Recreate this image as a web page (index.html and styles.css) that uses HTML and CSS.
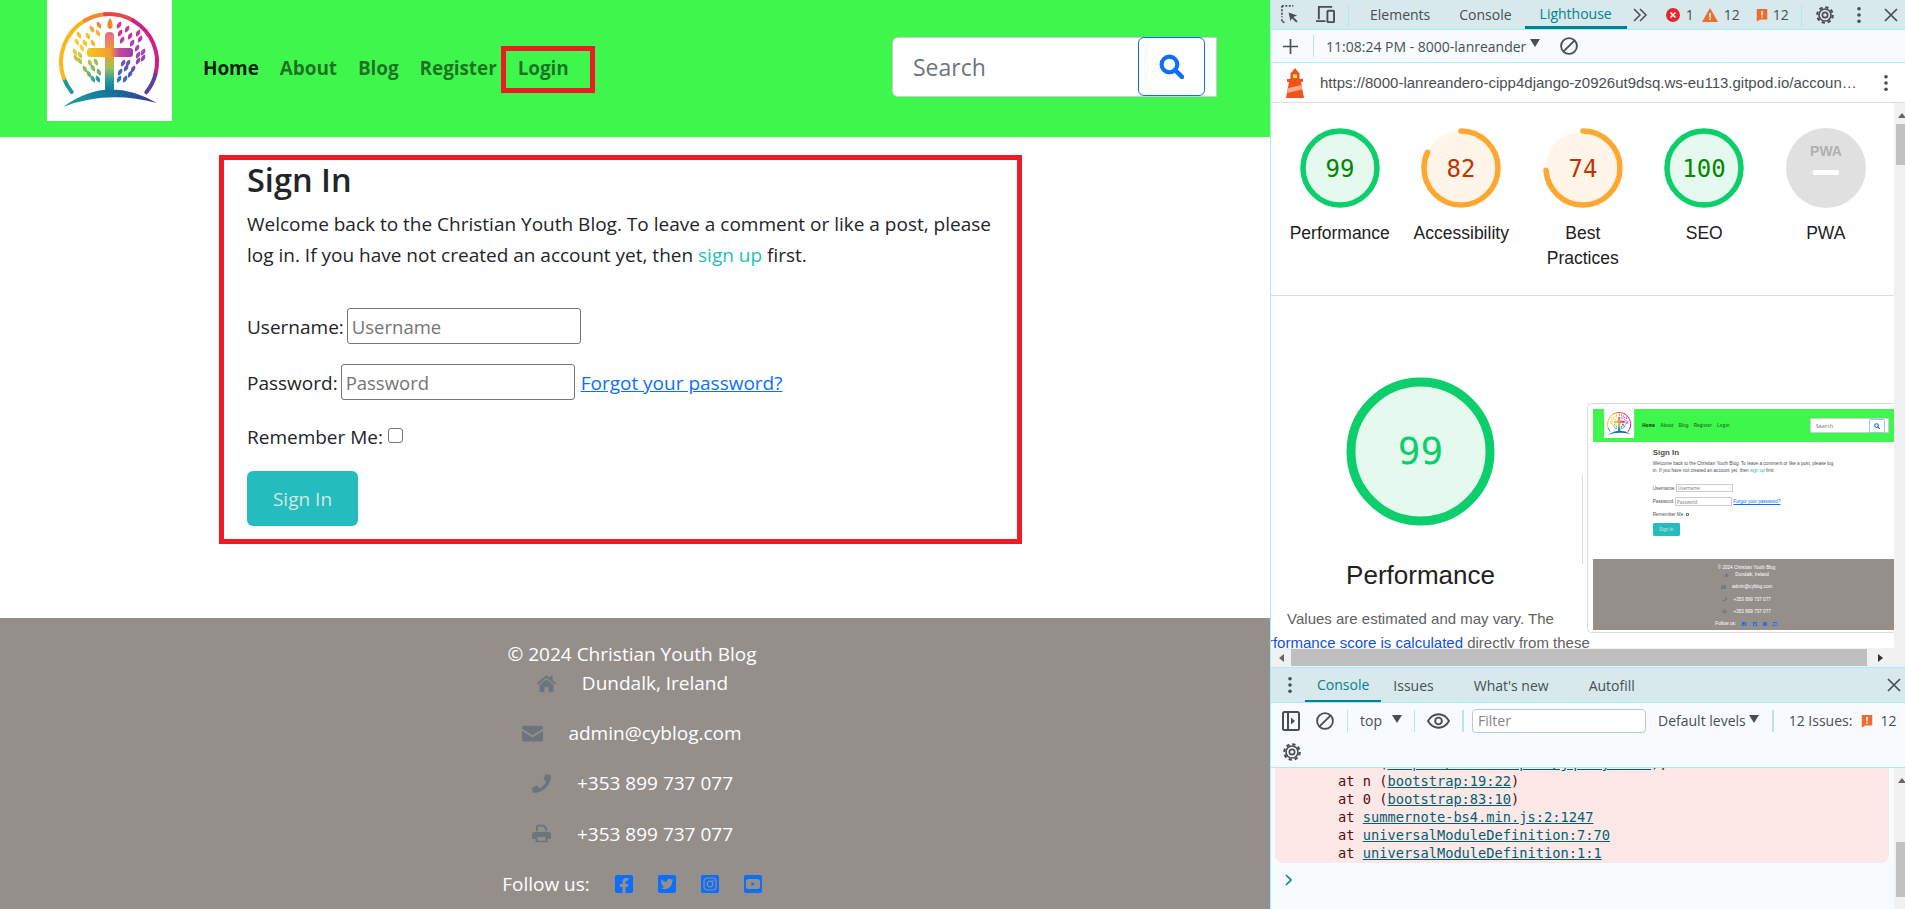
FILE: index.html
```html
<!DOCTYPE html>
<html lang="en">
<head>
    <meta charset="UTF-8">
    <meta name="viewport" content="width=device-width, initial-scale=1.0">
    <title>Christian Youth Blog - Sign In</title>
    <link rel="stylesheet" href="styles.css">
</head>
<body>

<!-- Shared icons -->
<svg class="icon-defs" aria-hidden="true">
    <defs>
        <linearGradient id="ground" x1="0" y1="0" x2="1" y2="0">
            <stop offset="0" stop-color="#1fa39a"/><stop offset=".5" stop-color="#12759f"/><stop offset="1" stop-color="#45308f"/>
        </linearGradient>
        <linearGradient id="crossV" x1="0" y1="0" x2="0" y2="1">
            <stop offset="0" stop-color="#e86a8c"/><stop offset=".35" stop-color="#f0a02c"/><stop offset=".6" stop-color="#9cc254"/><stop offset=".8" stop-color="#2a9aa0"/><stop offset="1" stop-color="#14709f"/>
        </linearGradient>
        <linearGradient id="crossH" x1="0" y1="0" x2="1" y2="0">
            <stop offset="0" stop-color="#f7c51d"/><stop offset=".5" stop-color="#f0a02c"/><stop offset=".7" stop-color="#c9489a"/><stop offset="1" stop-color="#9a3fae"/>
        </linearGradient>
        <path id="leafL" d="M-1.8-3.6C1.2-2.6 2.9 0 1.8 3.4C-1.4 2.8-3.3-.4-1.8-3.6Z"/>
        <path id="leafR" d="M1.8-3.6C-1.2-2.6-2.9 0-1.8 3.4C1.4 2.8 3.3-.4 1.8-3.6Z"/>
    </defs>
    <symbol id="logo" viewBox="0 0 125 121">
        <rect width="125" height="121" fill="#fff"/>
        <g fill="none" stroke-width="4" stroke-linecap="round">
            <path d="M24.7 92A48 48 0 0 1 16.9 78.4" stroke="#1b9a9a"/>
            <path d="M16.9 78.4A48 48 0 0 1 38 20.4" stroke="#f7b71d"/>
            <path d="M38 20.4A48 48 0 0 1 57.8 14.2" stroke="#f08a2b"/>
            <path d="M57.8 14.2A48 48 0 0 1 86 20.4" stroke="#e5484f"/>
            <path d="M86 20.4A48 48 0 0 1 108.4 74.4" stroke="#d01f86"/>
            <path d="M108.4 74.4A48 48 0 0 1 99.3 92.2" stroke="#5b3fa0"/>
        </g>
        <path d="M16 107Q60 74 110 103Q60 90 16 107Z" fill="url(#ground)"/>
        <path d="M63 18C66 22 67 28 63 29C59 28 60 22 63 18Z" fill="#f08a2b"/>
        <rect x="58" y="32" width="9" height="60" rx="4" fill="url(#crossV)"/>
        <rect x="40" y="48" width="46" height="9" rx="3" fill="url(#crossH)"/>
        <use href="#leafL" x="52" y="25" fill="#f08c2e"/><use href="#leafL" x="45" y="29" fill="#f7a823"/>
        <use href="#leafL" x="51" y="33" fill="#f7b71d"/><use href="#leafL" x="32" y="35" fill="#f9c31f"/>
        <use href="#leafL" x="41" y="36" fill="#f9c31f"/><use href="#leafL" x="30" y="42" fill="#f8d02c"/>
        <use href="#leafL" x="38" y="43" fill="#f5c52a"/><use href="#leafL" x="46" y="43" fill="#f1bd2d"/>
        <use href="#leafL" x="35" y="48" fill="#f6cd3a"/><use href="#leafL" x="28" y="52" fill="#e8c84a"/>
        <use href="#leafL" x="33" y="55" fill="#d2c44a"/><use href="#leafL" x="29" y="58" fill="#c2c64e"/>
        <use href="#leafL" x="33" y="61" fill="#b5c450"/><use href="#leafL" x="43" y="63" fill="#a8c452"/>
        <use href="#leafL" x="49" y="62" fill="#9dbf55"/><use href="#leafL" x="38" y="69" fill="#8cbf5c"/>
        <use href="#leafL" x="46" y="68" fill="#82bb60"/><use href="#leafL" x="42" y="74" fill="#6fb46a"/>
        <use href="#leafL" x="52" y="72" fill="#74b56a"/><use href="#leafL" x="46" y="79" fill="#3ea596"/>
        <use href="#leafL" x="51" y="79" fill="#2d9aa0"/>
        <use href="#leafR" x="72" y="25" fill="#e02f7e"/><use href="#leafR" x="80" y="29" fill="#d92f8c"/>
        <use href="#leafR" x="73" y="33" fill="#d62e90"/><use href="#leafR" x="91" y="33" fill="#cf2fa0"/>
        <use href="#leafR" x="83" y="36" fill="#cb30a5"/><use href="#leafR" x="75" y="40" fill="#c233a6"/>
        <use href="#leafR" x="93" y="39" fill="#c133ad"/><use href="#leafR" x="85" y="43" fill="#b938ad"/>
        <use href="#leafR" x="90" y="48" fill="#ad3fb0"/><use href="#leafR" x="96" y="52" fill="#a843b0"/>
        <use href="#leafR" x="91" y="55" fill="#a046ae"/><use href="#leafR" x="96" y="58" fill="#9549ae"/>
        <use href="#leafR" x="91" y="61" fill="#8a4cae"/><use href="#leafR" x="81" y="63" fill="#7a52ae"/>
        <use href="#leafR" x="76" y="63" fill="#7055ae"/><use href="#leafR" x="86" y="69" fill="#5f58b0"/>
        <use href="#leafR" x="79" y="68" fill="#5a5cb2"/><use href="#leafR" x="83" y="74" fill="#4f5fb4"/>
        <use href="#leafR" x="73" y="72" fill="#4f62b4"/><use href="#leafR" x="78" y="79" fill="#3f6ab8"/>
        <use href="#leafR" x="72" y="79" fill="#3a70b8"/>
    </symbol>
    <symbol id="i-search" viewBox="0 0 24 24">
        <circle cx="10" cy="10" r="7.5" fill="none" stroke="currentColor" stroke-width="4"/>
        <path d="M15.5 15.5L22 22" stroke="currentColor" stroke-width="4.4" stroke-linecap="round"/>
    </symbol>
    <symbol id="i-home" viewBox="0 0 24 20">
        <path fill="currentColor" d="M12 .5L1 9.6l1.4 1.7L12 3.4l9.6 7.9L23 9.6l-4-3.3V1.5h-3v2.3Z"/>
        <path fill="currentColor" d="M12 5.2L4 11.8V19a1 1 0 0 0 1 1h4.6v-5.6h4.8V20H19a1 1 0 0 0 1-1v-7.2Z"/>
    </symbol>
    <symbol id="i-mail" viewBox="0 0 24 18">
        <path fill="currentColor" d="M2 0h20a2 2 0 0 1 2 2v1.2L12 11 0 3.2V2a2 2 0 0 1 2-2Z"/>
        <path fill="currentColor" d="M0 5.8V16a2 2 0 0 0 2 2h20a2 2 0 0 0 2-2V5.8L12 13.6Z"/>
    </symbol>
    <symbol id="i-phone" viewBox="0 0 512 512">
        <path fill="currentColor" d="M493.4 24.6l-104-24c-11.3-2.6-22.9 3.3-27.5 13.9l-48 112c-4.2 9.8-1.4 21.3 6.9 28l60.6 49.6c-36 76.7-98.9 140.5-177.2 177.2l-49.6-60.6c-6.8-8.3-18.2-11.1-28-6.9l-112 48C3.9 366.5-2 378.1.6 389.4l24 104C27.1 504.2 36.7 512 48 512c256.1 0 464-207.5 464-464 0-11.2-7.7-20.9-18.6-23.4z"/>
    </symbol>
    <symbol id="i-print" viewBox="0 0 24 24">
        <path fill="currentColor" fill-rule="evenodd" d="M5 9V3a2 2 0 0 1 2-2h8l4 3.5V9h-2.5V5.5L14 3H7.5v6ZM3 10h18a3 3 0 0 1 3 3v6h-4.5v4h-15v-4H0v-6a3 3 0 0 1 3-3ZM7 16.5V21h10v-4.5Z"/>
    </symbol>
    <symbol id="i-fb" viewBox="0 32 448 448">
        <path fill="currentColor" d="M400 32H48A48 48 0 0 0 0 80v352a48 48 0 0 0 48 48h137.25V327.69h-63V256h63v-54.64c0-62.15 37-96.48 93.67-96.48 27.14 0 55.52 4.84 55.52 4.84v61h-31.27c-30.81 0-40.42 19.12-40.42 38.73V256h68.78l-11 71.69h-57.78V480H400a48 48 0 0 0 48-48V80a48 48 0 0 0-48-48z"/>
    </symbol>
    <symbol id="i-tw" viewBox="0 32 448 448">
        <path fill="currentColor" d="M400 32H48C21.5 32 0 53.5 0 80v352c0 26.5 21.5 48 48 48h352c26.5 0 48-21.5 48-48V80c0-26.5-21.5-48-48-48zm-48.9 158.8c.2 2.8.2 5.7.2 8.5 0 86.7-66 186.6-186.6 186.6-37.2 0-71.7-10.8-100.7-29.4 5.3.6 10.4.8 15.8.8 30.7 0 58.9-10.4 81.4-28-28.8-.6-53-19.5-61.3-45.5 10.1 1.5 19.2 1.5 29.6-1.2-30-6.1-52.5-32.5-52.5-64.4v-.8c8.7 4.9 18.9 7.9 29.6 8.3a65.447 65.447 0 0 1-29.2-54.6c0-12.2 3.2-23.4 8.9-33.1 32.3 39.8 80.8 65.8 135.2 68.6-9.3-44.5 24-80.6 64-80.6 18.9 0 35.9 7.9 47.9 20.7 14.8-2.8 29-8.3 41.6-15.8-4.9 15.2-15.1 28-28.6 36 13.1-1.4 25.9-5 37.7-10.1-8.9 13.1-20.1 24.7-32.9 34z"/>
    </symbol>
    <symbol id="i-ig" viewBox="0 0 18 18">
        <rect width="18" height="18" rx="2" fill="currentColor"/>
        <rect x="3" y="3" width="12" height="12" rx="3.2" fill="none" stroke="#958f8c" stroke-width="1.2"/>
        <circle cx="9" cy="9" r="2.8" fill="none" stroke="#958f8c" stroke-width="1.2"/>
        <circle cx="12.3" cy="5.7" r=".8" fill="#958f8c"/>
    </symbol>
    <symbol id="i-yt" viewBox="0 0 18 18">
        <rect width="18" height="18" rx="2" fill="currentColor"/>
        <rect x="2" y="4" width="14" height="10" rx="2.6" fill="#958f8c"/>
        <path d="M7.5 7v4l3.4-2Z" fill="currentColor"/>
    </symbol>
    <symbol id="i-gear" viewBox="0 0 24 24">
        <circle cx="12" cy="12" r="3.2" fill="none" stroke="currentColor" stroke-width="2"/>
        <circle cx="12" cy="12" r="7.2" fill="none" stroke="currentColor" stroke-width="2"/>
        <circle cx="12" cy="12" r="9.3" fill="none" stroke="currentColor" stroke-width="2.6" stroke-dasharray="4 3.3"/>
    </symbol>
    <symbol id="i-block" viewBox="0 0 24 24">
        <circle cx="12" cy="12" r="9.5" fill="none" stroke="currentColor" stroke-width="2.2"/>
        <path d="M18.5 5.5L5.5 18.5" stroke="currentColor" stroke-width="2.2"/>
    </symbol>
    <symbol id="i-flag" viewBox="0 0 16 16">
        <path fill="#ed6d2f" d="M2 1h12v12H6l-4 2.5Z"/>
        <path fill="#fff" d="M7.2 3.5h1.6v5H7.2ZM7.2 9.6h1.6v1.6H7.2Z"/>
    </symbol>
    <symbol id="i-kebab" viewBox="0 0 6 20">
        <circle cx="3" cy="3" r="2" fill="currentColor"/><circle cx="3" cy="10" r="2" fill="currentColor"/><circle cx="3" cy="17" r="2" fill="currentColor"/>
    </symbol>
    <symbol id="i-close" viewBox="0 0 14 14">
        <path d="M1 1L13 13M13 1L1 13" stroke="currentColor" stroke-width="1.7"/>
    </symbol>
</svg>

<!-- Blog page -->
<div class="page">
    <header class="site-header">
        <svg class="logo"><use href="#logo"/></svg>
        <nav class="site-nav">
            <a class="nav-link active">Home</a>
            <a class="nav-link">About</a>
            <a class="nav-link">Blog</a>
            <a class="nav-link">Register</a>
            <a class="nav-link nav-boxed">Login</a>
        </nav>
        <form class="search">
            <input class="search-input" placeholder="Search">
            <span class="search-btn"><svg class="search-icon"><use href="#i-search"/></svg></span>
        </form>
    </header>

    <main class="signin">
        <h2 class="signin-title">Sign In</h2>
        <p class="signin-text">Welcome back to the Christian Youth Blog. To leave a comment or like a post, please log in. If you have not created an account yet, then <a class="link-teal">sign up</a> first.</p>
        <div class="field"><label>Username:</label><input class="text-input" placeholder="Username"></div>
        <div class="field"><label>Password:</label><input class="text-input" placeholder="Password"><a class="forgot">Forgot your password?</a></div>
        <div class="field field-check"><label>Remember Me:</label><span class="checkbox"></span></div>
        <span class="signin-btn">Sign In</span>
    </main>

    <footer class="site-footer">
        <div class="copyright">© 2024 Christian Youth Blog</div>
        <div class="contact"><svg class="contact-icon home"><use href="#i-home"/></svg><span>Dundalk, Ireland</span></div>
        <div class="contact"><svg class="contact-icon"><use href="#i-mail"/></svg><span>admin@cyblog.com</span></div>
        <div class="contact"><svg class="contact-icon"><use href="#i-phone"/></svg><span>+353 899 737 077</span></div>
        <div class="contact"><svg class="contact-icon"><use href="#i-print"/></svg><span>+353 899 737 077</span></div>
        <div class="follow">
            <span>Follow us:</span>
            <svg class="social"><use href="#i-fb"/></svg>
            <svg class="social"><use href="#i-tw"/></svg>
            <svg class="social"><use href="#i-ig"/></svg>
            <svg class="social"><use href="#i-yt"/></svg>
        </div>
    </footer>
</div>

<!-- DevTools -->
<aside class="devtools">
    <div class="dt-tabs">
        <svg class="dt-ic ic-inspect" viewBox="0 0 20 20"><path d="M1 1h12M1 1v12M1 15v3h3" fill="none" stroke="#474f52" stroke-width="1.8" stroke-dasharray="2 1.6"/><path d="M8 8l9 3-4 1.5 4.5 4.5-1.5 1.5-4.5-4.5L10 17Z" fill="#474f52"/></svg>
        <svg class="dt-ic ic-device" viewBox="0 0 22 20"><path d="M4 15V2h14M1 17h10" fill="none" stroke="#474f52" stroke-width="2"/><rect x="13" y="6" width="7" height="12" rx="1" fill="none" stroke="#474f52" stroke-width="2"/></svg>
        <span class="dt-sep"></span>
        <span class="dt-tab">Elements</span>
        <span class="dt-tab">Console</span>
        <span class="dt-tab dt-tab-on">Lighthouse</span>
        <svg class="ic-more" viewBox="0 0 16 14"><path d="M2 1l6 6-6 6M8 1l6 6-6 6" fill="none" stroke="#474f52" stroke-width="1.5"/></svg>
        <svg class="ic-count ic-err" viewBox="0 0 14 14"><circle cx="7" cy="7" r="7" fill="#e3262a"/><path d="M4.5 4.5l5 5M9.5 4.5l-5 5" stroke="#fff" stroke-width="1.6"/></svg>
        <span class="dt-count">1</span>
        <svg class="ic-count ic-warn" viewBox="0 0 16 14"><path d="M8 0l8 14H0Z" fill="#ed6d2f"/><path d="M7.2 5h1.6v4.6H7.2ZM7.2 10.6h1.6V12H7.2Z" fill="#fff"/></svg>
        <span class="dt-count">12</span>
        <svg class="ic-count ic-iss"><use href="#i-flag"/></svg>
        <span class="dt-count dt-count-iss">12</span>
        <span class="dt-sep dt-sep-b"></span>
        <svg class="ic-gear"><use href="#i-gear"/></svg>
        <svg class="ic-kebab"><use href="#i-kebab"/></svg>
        <svg class="ic-close"><use href="#i-close"/></svg>
    </div>

    <div class="lh-bar">
        <svg class="ic-plus" viewBox="0 0 16 16"><path d="M8 0v16M0 8h16" stroke="#474f52" stroke-width="1.8"/></svg>
        <span class="dt-sep"></span>
        <span class="lh-run">11:08:24 PM - 8000-lanreandero-cipp4django</span>
        <span class="caret"></span>
        <svg class="ic-block"><use href="#i-block"/></svg>
    </div>

    <div class="lh-url">
        <svg class="ic-house" viewBox="0 0 20 30"><path d="M10 0l4 5H6Z" fill="#f1511b"/><rect x="5.5" y="5" width="9" height="6" fill="#f1511b"/><rect x="8" y="6.5" width="4" height="3.5" fill="#fbe54d"/><rect x="2" y="11" width="16" height="3" fill="#f1511b"/><path d="M4 14h12l3 16H1Z" fill="#f1511b"/><path d="M3.3 20l13-3 .8 4.5L2 25Z" fill="#f8a78c"/></svg>
        <span class="lh-url-text">https://8000-lanreandero-cipp4django-z0926ut9dsq.ws-eu113.gitpod.io/accounts/login/</span>
        <svg class="ic-kebab ic-kebab-url"><use href="#i-kebab"/></svg>
    </div>

    <div class="lh-report">
        <div class="lh-body">
            <div class="scores">
                <div class="score">
                    <svg class="gauge" viewBox="0 0 80 80"><circle class="g-fill pass" cx="40" cy="40" r="37"/><circle class="g-arc pass" cx="40" cy="40" r="37" pathLength="100" stroke-dasharray="100 100" transform="rotate(-90 40 40)"/><text class="g-num pass" x="40" y="49">99</text></svg>
                    <span class="score-label">Performance</span>
                </div>
                <div class="score">
                    <svg class="gauge" viewBox="0 0 80 80"><circle class="g-fill avg" cx="40" cy="40" r="37"/><circle class="g-arc avg" cx="40" cy="40" r="37" pathLength="100" stroke-dasharray="82 100" transform="rotate(-90 40 40)"/><text class="g-num avg" x="40" y="49">82</text></svg>
                    <span class="score-label">Accessibility</span>
                </div>
                <div class="score">
                    <svg class="gauge" viewBox="0 0 80 80"><circle class="g-fill avg" cx="40" cy="40" r="37"/><circle class="g-arc avg" cx="40" cy="40" r="37" pathLength="100" stroke-dasharray="74 100" transform="rotate(-90 40 40)"/><text class="g-num avg" x="40" y="49">74</text></svg>
                    <span class="score-label">Best Practices</span>
                </div>
                <div class="score">
                    <svg class="gauge" viewBox="0 0 80 80"><circle class="g-fill pass" cx="40" cy="40" r="37"/><circle class="g-arc pass" cx="40" cy="40" r="37" pathLength="100" stroke-dasharray="100 100" transform="rotate(-90 40 40)"/><text class="g-num pass" x="40" y="49">100</text></svg>
                    <span class="score-label">SEO</span>
                </div>
                <div class="score">
                    <svg class="gauge" viewBox="0 0 80 80"><circle cx="40" cy="40" r="40" fill="#e0e0e0"/><text class="pwa-text" x="40" y="28">PWA</text><rect x="27" y="42" width="26" height="5" rx="1.5" fill="#fff"/></svg>
                    <span class="score-label">PWA</span>
                </div>
            </div>

            <div class="summary">
                <div class="summary-main">
                    <svg class="gauge-big" viewBox="0 0 150 150"><circle cx="75" cy="75" r="70" fill="#e5f9ee" stroke="#0cce6b" stroke-width="9"/><text class="g-big-num" x="75" y="88">99</text></svg>
                    <div class="summary-title">Performance</div>
                    <div class="summary-note">Values are estimated and may vary. The</div>
                    <div class="summary-note"><a class="link-blue">performance score is calculated</a> directly from these</div>
                </div>
                <span class="summary-line"></span>
                <div class="thumb">
                    <div class="page">
                        <header class="site-header">
                            <svg class="logo"><use href="#logo"/></svg>
                            <nav class="site-nav">
                                <a class="nav-link active">Home</a>
                                <a class="nav-link">About</a>
                                <a class="nav-link">Blog</a>
                                <a class="nav-link">Register</a>
                                <a class="nav-link">Login</a>
                            </nav>
                            <form class="search">
                                <input class="search-input" placeholder="Search">
                                <span class="search-btn"><svg class="search-icon"><use href="#i-search"/></svg></span>
                            </form>
                        </header>
                        <main class="signin">
                            <h2 class="signin-title">Sign In</h2>
                            <p class="signin-text">Welcome back to the Christian Youth Blog. To leave a comment or like a post, please log in. If you have not created an account yet, then <a class="link-teal">sign up</a> first.</p>
                            <div class="field"><label>Username:</label><input class="text-input" placeholder="Username"></div>
                            <div class="field"><label>Password:</label><input class="text-input" placeholder="Password"><a class="forgot">Forgot your password?</a></div>
                            <div class="field field-check"><label>Remember Me:</label><span class="checkbox"></span></div>
                            <span class="signin-btn">Sign In</span>
                        </main>
                        <footer class="site-footer">
                            <div class="copyright">© 2024 Christian Youth Blog</div>
                            <div class="contact"><svg class="contact-icon home"><use href="#i-home"/></svg><span>Dundalk, Ireland</span></div>
                            <div class="contact"><svg class="contact-icon"><use href="#i-mail"/></svg><span>admin@cyblog.com</span></div>
                            <div class="contact"><svg class="contact-icon"><use href="#i-phone"/></svg><span>+353 899 737 077</span></div>
                            <div class="contact"><svg class="contact-icon"><use href="#i-print"/></svg><span>+353 899 737 077</span></div>
                            <div class="follow">
                                <span>Follow us:</span>
                                <svg class="social"><use href="#i-fb"/></svg>
                                <svg class="social"><use href="#i-tw"/></svg>
                                <svg class="social"><use href="#i-ig"/></svg>
                                <svg class="social"><use href="#i-yt"/></svg>
                            </div>
                        </footer>
                    </div>
                </div>
            </div>
        </div>
        <div class="scroll-v">
            <span class="arrow-up"></span>
            <span class="scroll-thumb-v"></span>
        </div>
    </div>

    <div class="scroll-h">
        <span class="arrow-left"></span>
        <span class="scroll-thumb-h"></span>
        <span class="arrow-right"></span>
    </div>

    <!-- Console drawer -->
    <div class="drawer-tabs">
        <svg class="ic-kebab ic-kebab-drawer"><use href="#i-kebab"/></svg>
        <span class="drawer-tab drawer-tab-on">Console</span>
        <span class="drawer-tab">Issues</span>
        <span class="drawer-tab">What's new</span>
        <span class="drawer-tab">Autofill</span>
        <svg class="ic-close ic-close-drawer"><use href="#i-close"/></svg>
    </div>
    <div class="console-tools">
        <div class="tools-row">
            <svg class="ic-panel" viewBox="0 0 18 20"><rect x="1" y="1" width="16" height="18" rx="1.5" fill="none" stroke="#474f52" stroke-width="2"/><path d="M6 1v18" stroke="#474f52" stroke-width="2"/><path d="M9 6.5l4 3.5-4 3.5Z" fill="#474f52"/></svg>
            <svg class="ic-block ic-block-tool"><use href="#i-block"/></svg>
            <span class="dt-sep"></span>
            <span class="tool-top">top</span>
            <span class="caret caret-top"></span>
            <span class="dt-sep"></span>
            <svg class="ic-eye" viewBox="0 0 24 16"><path d="M1 8C4 3 8 1 12 1s8 2 11 7c-3 5-7 7-11 7S4 13 1 8Z" fill="none" stroke="#474f52" stroke-width="2"/><circle cx="12" cy="8" r="3.5" fill="none" stroke="#474f52" stroke-width="2"/></svg>
            <span class="dt-sep dt-sep-thick"></span>
            <span class="filter">Filter</span>
            <span class="tool-levels">Default levels</span>
            <span class="caret caret-levels"></span>
            <span class="dt-sep dt-sep-thick dt-sep-issues"></span>
            <span class="tool-issues">12 Issues:</span>
            <svg class="ic-flag-tool"><use href="#i-flag"/></svg>
            <span class="tool-issues">12</span>
        </div>
        <div class="tools-row tools-row-2"><svg class="ic-gear"><use href="#i-gear"/></svg></div>
    </div>
    <div class="console-log">
        <div class="log-main">
            <div class="log-error">
                <div class="log-line log-cut">at o (<a>webpack/bootstrap:../jquery-slim</a>),</div>
                <div class="log-line">at n (<a>bootstrap:19:22</a>)</div>
                <div class="log-line">at 0 (<a>bootstrap:83:10</a>)</div>
                <div class="log-line">at <a>summernote-bs4.min.js:2:1247</a></div>
                <div class="log-line">at <a>universalModuleDefinition:7:70</a></div>
                <div class="log-line">at <a>universalModuleDefinition:1:1</a></div>
            </div>
            <svg class="ic-prompt" viewBox="0 0 8 12"><path d="M1 1l5 5-5 5" fill="none" stroke="#00838f" stroke-width="1.6"/></svg>
        </div>
        <div class="scroll-v scroll-v-log">
            <span class="arrow-up"></span>
            <span class="scroll-thumb-v"></span>
        </div>
    </div>
</aside>

</body>
</html>
```

FILE: styles.css
```css
/* Basic Reset */
* {
    margin: 0;
    padding: 0;
    box-sizing: border-box;
}
body {
    display: flex;
    width: 1905px;
    height: 909px;
    overflow: hidden;
    background: #fff;
    color: #212529;
    font-family: "Open Sans", sans-serif;
}
.icon-defs {
    position: absolute;
    width: 0;
    height: 0;
}

/* Blog page */
.page {
    display: flex;
    flex-direction: column;
    flex: none;
    width: 1270px;
    height: 909px;
    background: #fff;
}
.site-header {
    display: flex;
    align-items: center;
    flex: none;
    height: 137px;
    padding: 0 53px 0 47px;
    background: #3ff74c;
}
.logo {
    align-self: flex-start;
    flex: none;
    width: 125px;
    height: 121px;
}
.site-nav {
    display: flex;
    gap: 21px;
    margin: 0 0 2px 31px;
    font-size: 19px;
    font-weight: 700;
    letter-spacing: -0.1px;
}
.nav-link {
    color: rgba(0, 0, 0, 0.55);
}
.nav-link.active {
    color: rgba(0, 0, 0, 0.9);
}
/* Red annotation round the login link */
.nav-boxed {
    position: relative;
}
.nav-boxed::after {
    content: "";
    position: absolute;
    top: -9px;
    bottom: -12px;
    left: -17px;
    right: -26px;
    border: 5px solid #ed1c24;
}
.search {
    display: flex;
    align-items: flex-start;
    width: 325px;
    height: 60px;
    margin: 0 0 3px auto;
    padding-right: 11px;
    background: #fff;
    border: 1px solid #ccc;
    border-radius: 6px 0 0 6px;
}
.search-input {
    flex: 1;
    min-width: 0;
    height: 58px;
    padding-left: 20px;
    background: none;
    border: 0;
    font: 23px "Open Sans", sans-serif;
}
.search-input::placeholder {
    color: #6c757d;
    opacity: 1;
}
.search-btn {
    display: flex;
    align-items: center;
    justify-content: center;
    flex: none;
    width: 67px;
    height: 59px;
    margin-top: -1px;
    border: 1px solid #0d6efd;
    border-radius: 6px;
    color: #0d6efd;
}
.search-icon {
    width: 25px;
    height: 25px;
}

/* Sign in box */
.signin {
    flex: none;
    width: 803px;
    height: 389px;
    margin: 18px 0 0 219px;
    padding: 0 0 0 23px;
    border: 5px solid #ed1c24;
    font-size: 19px;
}
.signin-title {
    height: 40px;
    font-size: 32.5px;
    font-weight: 600;
    line-height: 40px;
}
.signin-text {
    width: 750px;
    margin-top: 9px;
    line-height: 30.5px;
}
.link-teal {
    color: #25bcbd;
}
.field {
    display: flex;
    align-items: center;
    gap: 3px;
    height: 36px;
    margin-top: 20px;
}
.field label,
.forgot {
    margin-top: 2px;
}
.field-check label {
    margin-top: -2px;
}
.signin-text + .field {
    margin-top: 38px;
}
.text-input {
    width: 234px;
    height: 36px;
    padding: 0 4px;
    border: 1px solid #767676;
    border-radius: 3px;
    font: 18.5px "Open Sans", sans-serif;
}
.text-input::placeholder {
    color: #757575;
}
.forgot {
    margin-left: 3px;
    color: #0d6efd;
    text-decoration: underline;
}
.checkbox {
    width: 15px;
    height: 15px;
    margin: -5px 0 0 2px;
    border: 1px solid #767676;
    border-radius: 3px;
    background: #fff;
}
.signin-btn {
    display: flex;
    align-items: center;
    justify-content: center;
    width: 111px;
    height: 55px;
    margin-top: 15px;
    background: #25bcbd;
    border-radius: 6px;
    color: #d5e6e6;
}

/* Footer */
.site-footer {
    display: flex;
    flex-direction: column;
    align-items: center;
    flex: 1;
    margin-top: 74px;
    padding: 21px 6px 0 0;
    background: #958f8c;
    color: #fff;
    font-size: 19px;
    line-height: 30px;
}
.copyright {
    margin-bottom: -1px;
}
.contact {
    display: flex;
    align-items: center;
    gap: 25px;
    margin-bottom: 20.2px;
}
.contact-icon {
    width: 21px;
    height: 19px;
    color: #6c757d;
}
.follow {
    display: flex;
    align-items: center;
}
.social {
    width: 18px;
    height: 18px;
    margin-left: 25px;
    color: #0d6efd;
}

/* DevTools */
.devtools {
    display: flex;
    flex-direction: column;
    flex: none;
    width: 635px;
    height: 909px;
    background: #fff;
    border-left: 1px solid #a5eefc;
    color: #474f52;
    font-size: 14px;
}
.dt-tabs {
    display: flex;
    align-items: center;
    flex: none;
    height: 30px;
    padding-left: 10px;
    background: #d7e9ec;
    border-bottom: 1px solid #a5eefc;
}
.dt-ic {
    flex: none;
    width: 19px;
    height: 19px;
}
.ic-device {
    width: 21px;
    margin-left: 15px;
}
.dt-sep {
    flex: none;
    width: 1px;
    height: 22px;
    margin: 0 12px;
    background: #b4e6ef;
}
.dt-tab {
    display: flex;
    align-items: center;
    height: 29px;
    margin-left: 9px;
    margin-right: 13px;
}
.dt-tab + .dt-tab {
    margin-left: 16px;
}
.dt-tab + .dt-tab-on {
    margin-left: 0;
    margin-right: 0;
    padding: 0 15px;
    border-bottom: 3px solid #00838f;
    color: #00838f;
}
.ic-more {
    flex: none;
    width: 16px;
    height: 14px;
    margin-left: 5px;
}
.ic-count {
    flex: none;
    width: 14px;
    height: 14px;
}
.ic-err {
    margin-left: 18px;
}
.ic-warn {
    width: 16px;
    margin-left: 8px;
}
.ic-iss {
    margin-left: 15px;
}
.dt-count {
    margin-left: 6px;
    font-size: 14px;
}
.dt-count-iss {
    margin-left: 4px;
}
.dt-sep-b {
    margin: 0 13px 0 12px;
}
.ic-gear {
    flex: none;
    width: 20px;
    height: 20px;
}
.ic-kebab {
    flex: none;
    width: 6px;
    height: 18px;
    margin-left: 21px;
}
.ic-close {
    flex: none;
    width: 14px;
    height: 14px;
    margin-left: 22px;
}
.lh-bar {
    display: flex;
    align-items: center;
    flex: none;
    height: 33px;
    padding-left: 12px;
    background: #f7fbfe;
    border-bottom: 1px solid #a5eefc;
}
.ic-plus {
    flex: none;
    width: 15px;
    height: 15px;
}
.lh-bar .dt-sep {
    margin: 0 12px 0 15px;
}
.lh-run {
    width: 201px;
    overflow: hidden;
    white-space: nowrap;
}
.caret {
    flex: none;
    width: 0;
    height: 0;
    border-left: 5px solid transparent;
    border-right: 5px solid transparent;
    border-top: 8px solid #474f52;
}
.lh-bar .caret {
    margin: -6px 0 0 3px;
}
.ic-block {
    flex: none;
    width: 20px;
    height: 20px;
    margin-left: 19px;
}
.lh-url {
    display: flex;
    align-items: center;
    flex: none;
    height: 40px;
    padding-left: 14px;
    border-bottom: 1px solid #ddd;
}
.ic-house {
    flex: none;
    width: 20px;
    height: 30px;
}
.lh-url-text {
    width: 540px;
    margin-left: 15px;
    overflow: hidden;
    font-family: "Liberation Sans", Arial, sans-serif;
    font-size: 15px;
    text-overflow: ellipsis;
    white-space: nowrap;
}
.ic-kebab-url {
    margin-left: 23px;
}

/* Lighthouse report */
.lh-report {
    display: flex;
    flex: none;
    height: 545px;
    overflow: hidden;
}
.lh-body {
    flex: none;
    width: 623px;
    overflow: hidden;
    font-family: "Liberation Sans", Arial, sans-serif;
}
.scores {
    display: grid;
    grid-template-columns: repeat(5, 121.5px);
    height: 193px;
    padding: 25px 0 0 8px;
    border-bottom: 1px solid #ddd;
}
.score {
    display: flex;
    flex-direction: column;
    align-items: center;
    text-align: center;
}
.gauge {
    width: 80px;
    height: 80px;
}
.g-fill {
    stroke: none;
}
.g-fill.pass {
    fill: #e5f9ee;
}
.g-fill.avg {
    fill: #fff5e9;
}
.g-arc {
    fill: none;
    stroke-width: 5.5;
    stroke-linecap: round;
}
.g-arc.pass {
    stroke: #0cce6b;
}
.g-arc.avg {
    stroke: #ffa733;
}
.g-num {
    font-family: "DejaVu Sans Mono", monospace;
    font-size: 24px;
    text-anchor: middle;
}
.g-num.pass {
    fill: #008800;
}
.g-num.avg {
    fill: #c33300;
}
.pwa-text {
    fill: #b0b0b0;
    font-size: 14px;
    font-weight: 700;
    text-anchor: middle;
}
.score-label {
    width: 110px;
    margin-top: 13px;
    color: #212121;
    font-size: 17.5px;
    line-height: 25px;
}
.summary {
    display: flex;
    align-items: flex-start;
}
.summary-main {
    display: flex;
    flex-direction: column;
    align-items: center;
    flex: none;
    width: 299px;
    height: 352px;
    padding-top: 81px;
}
.gauge-big {
    flex: none;
    width: 149px;
    height: 149px;
}
.g-big-num {
    fill: #0cce6b;
    font-family: "DejaVu Sans Mono", monospace;
    font-size: 38px;
    text-anchor: middle;
}
.summary-title {
    margin-top: 33px;
    color: #212121;
    font-size: 26px;
    line-height: 32px;
}
.summary-note {
    flex: none;
    margin-top: 16px;
    color: #616161;
    font-size: 15px;
    line-height: 24px;
    white-space: nowrap;
}
.summary-note + .summary-note {
    margin-top: 0;
}
.link-blue {
    color: #0f4fe0;
}
.summary-line {
    flex: none;
    width: 1px;
    height: 90px;
    margin: 178px 0 0 12px;
    background: #ddd;
}
.thumb {
    flex: none;
    width: 320px;
    height: 230px;
    margin: 107px 0 0 4px;
    padding: 5px 0 0 5px;
    overflow: hidden;
    background: #fff;
    border: 1px solid #ddd;
    border-right: 0;
    border-radius: 5px 0 0 5px;
}
.thumb .page {
    zoom: 0.243;
}
.thumb .signin {
    border-color: transparent;
}
.thumb .text-input {
    border-color: #ccc;
}
.thumb .search-btn {
    border-color: #9ec0f0;
}
.scroll-v {
    position: relative;
    flex: 1;
    background: #f1f1f1;
}
.arrow-up {
    position: absolute;
    top: 10px;
    left: 4px;
    border-left: 4px solid transparent;
    border-right: 4px solid transparent;
    border-bottom: 5px solid #666;
}
.scroll-thumb-v {
    position: absolute;
    top: 21px;
    left: 2px;
    right: 0;
    height: 41px;
    background: #c1c1c1;
}
.scroll-h {
    display: flex;
    align-items: center;
    flex: none;
    height: 20px;
    background: #f1f1f1;
    border-bottom: 1px solid #a5eefc;
}
.arrow-left {
    margin-left: 8px;
    border-top: 4px solid transparent;
    border-bottom: 4px solid transparent;
    border-right: 5px solid #666;
}
.scroll-thumb-h {
    width: 576px;
    height: 17px;
    margin-left: 7px;
    background: #bfbfbf;
}
.arrow-right {
    margin-left: 11px;
    border-top: 4px solid transparent;
    border-bottom: 4px solid transparent;
    border-left: 5px solid #333;
}

/* Console drawer */
.drawer-tabs {
    display: flex;
    align-items: center;
    flex: none;
    height: 34px;
    padding-left: 16px;
    background: #d7e9ec;
}
.ic-kebab-drawer {
    margin: 0 12px 0 0;
}
.drawer-tab {
    display: flex;
    align-items: center;
    height: 34px;
    margin-right: 40px;
}
.drawer-tab-on {
    margin-right: 12px;
    padding: 0 12px;
    border-bottom: 2px solid #00838f;
    color: #00838f;
}
.ic-close-drawer {
    margin-left: auto;
    margin-right: 4px;
}
.console-tools {
    flex: none;
    height: 66px;
    padding-top: 1px;
    background: #f7fbfe;
    border-top: 1px solid #a5eefc;
    border-bottom: 1px solid #a5eefc;
}
.tools-row {
    display: flex;
    align-items: center;
    height: 33px;
    padding-left: 11px;
}
.tools-row-2 {
    height: 30px;
}
.ic-panel {
    flex: none;
    width: 18px;
    height: 20px;
}
.ic-block-tool {
    margin-left: 15px;
}
.tools-row .dt-sep {
    margin: 0 12px;
}
.tool-top {
    width: 22px;
}
.caret-top {
    margin: -3px 0 0 10px;
}
.ic-eye {
    flex: none;
    width: 23px;
    height: 16px;
}
.tools-row .dt-sep-thick {
    width: 2px;
    margin: 0 8px 0 12px;
}
.filter {
    display: flex;
    align-items: center;
    flex: none;
    width: 174px;
    height: 24px;
    padding-left: 5px;
    background: #fff;
    border: 1px solid #c0c8c8;
    border-radius: 4px;
    color: #80868b;
}
.tool-levels {
    margin-left: 12px;
    white-space: nowrap;
}
.caret-levels {
    margin: -4px 0 0 3px;
}
.tools-row .dt-sep-issues {
    margin: 0 15px 0 13px;
}
.tool-issues {
    white-space: nowrap;
}
.ic-flag-tool {
    flex: none;
    width: 14px;
    height: 14px;
    margin: 0 6px 0 8px;
}
.console-log {
    display: flex;
    flex: 1;
    min-height: 0;
    overflow: hidden;
    background: #f7fbfe;
}
.log-main {
    flex: none;
    width: 623px;
}
.log-error {
    height: 95px;
    margin: 0 5px 0 4px;
    padding-left: 63px;
    overflow: hidden;
    background: #fce8e6;
    border-radius: 0 0 8px 8px;
    color: #5c0a0a;
    font-family: "DejaVu Sans Mono", monospace;
    font-size: 13.7px;
    line-height: 18px;
}
.log-line a {
    color: #005f73;
    text-decoration: underline;
}
.log-cut {
    margin-top: -14px;
}
.ic-prompt {
    display: block;
    width: 8px;
    height: 12px;
    margin: 11px 0 0 14px;
}
.scroll-v-log {
    flex: 1;
}
.scroll-v-log .scroll-thumb-v {
    top: 74px;
    height: 55px;
}
```
